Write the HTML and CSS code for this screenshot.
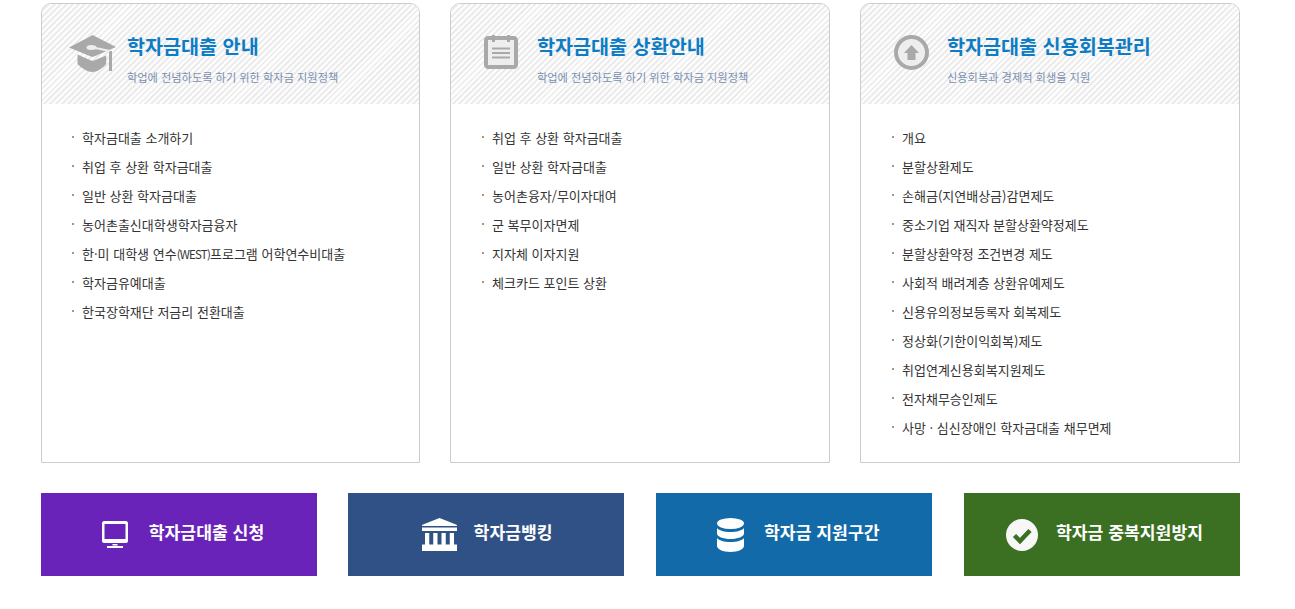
FILE: index.html
```html
<!DOCTYPE html>
<html lang="ko">

<head>
    <meta charset="utf-8">
    <title>학자금대출</title>
    <link rel="stylesheet" href="styles.css">
</head>

<body>
    <div class="wrap">
        <div class="cards">
            <div class="card">
                <div class="card-head">
                    <div class="head-icon">
                        <svg width="47" height="37" viewBox="0 0 47 37">
                            <path fill="#a9a9a9" d="M23.500 0 47 12 25 21.500c-1 .4-2 .4-3 0L0 12.500 22 1z" />
                            <path fill="#a9a9a9" d="M8.500 19.500 22 25.500c1 .4 2.200 .4 3.200 0l12-5v8.500C33 33.500 28 37 23.500 37S13 33.500 8.500 29z" />
                            <path fill="none" stroke="#a9a9a9" stroke-width="3" d="M41.500 16v20" />
                            <path fill="none" stroke="#eeeeee" stroke-width="2" d="M24 12.500 41 16" />
                            <ellipse cx="22.500" cy="12.500" rx="5" ry="2.500" fill="#eeeeee" />
                        </svg>
                    </div>
                    <div class="head-text">
                        <h2>학자금대출 안내</h2>
                        <p>학업에 전념하도록 하기 위한 학자금 지원정책</p>
                    </div>
                </div>
                <ul class="links">
                    <li>학자금대출 소개하기</li>
                    <li>취업 후 상환 학자금대출</li>
                    <li>일반 상환 학자금대출</li>
                    <li>농어촌출신대학생학자금융자</li>
                    <li>한·미 대학생 연수<span class="latin">(WEST)</span>프로그램 어학연수비대출</li>
                    <li>학자금유예대출</li>
                    <li>한국장학재단 저금리 전환대출</li>
                </ul>
            </div>
            <div class="card">
                <div class="card-head">
                    <div class="head-icon">
                        <svg width="34" height="34" viewBox="0 0 34 34">
                            <path fill="#a9a9a9" d="M4 1h4V0h3v1h12V0h3v1h4c2 0 4 2 4 4v25c0 2-2 4-4 4H4c-2 0-4-2-4-4V5c0-2 2-4 4-4z" />
                            <rect x="4" y="5" width="26" height="25" fill="#eeeeee" />
                            <path fill="#a9a9a9" d="M8 3h3v4H8zM23 3h3v4h-3z" />
                            <path fill="none" stroke="#a9a9a9" stroke-width="2" d="M8 13.500h18M8 18h18M8 22.500h18" />
                        </svg>
                    </div>
                    <div class="head-text">
                        <h2>학자금대출 상환안내</h2>
                        <p>학업에 전념하도록 하기 위한 학자금 지원정책</p>
                    </div>
                </div>
                <ul class="links">
                    <li>취업 후 상환 학자금대출</li>
                    <li>일반 상환 학자금대출</li>
                    <li>농어촌융자/무이자대여</li>
                    <li>군 복무이자면제</li>
                    <li>지자체 이자지원</li>
                    <li>체크카드 포인트 상환</li>
                </ul>
            </div>
            <div class="card">
                <div class="card-head">
                    <div class="head-icon">
                        <svg width="35" height="35" viewBox="0 0 35 35">
                            <circle cx="17.500" cy="17.500" r="15.500" fill="#eeeeee" stroke="#a9a9a9" stroke-width="4" />
                            <path fill="#a9a9a9" d="M17.500 10 25 18h-3.500v7h-8v-7H10z" />
                        </svg>
                    </div>
                    <div class="head-text">
                        <h2>학자금대출 신용회복관리</h2>
                        <p>신용회복과 경제적 회생을 지원</p>
                    </div>
                </div>
                <ul class="links">
                    <li>개요</li>
                    <li>분할상환제도</li>
                    <li>손해금(지연배상금)감면제도</li>
                    <li>중소기업 재직자 분할상환약정제도</li>
                    <li>분할상환약정 조건변경 제도</li>
                    <li>사회적 배려계층 상환유예제도</li>
                    <li>신용유의정보등록자 회복제도</li>
                    <li>정상화(기한이익회복)제도</li>
                    <li>취업연계신용회복지원제도</li>
                    <li>전자채무승인제도</li>
                    <li>사망 · 심신장애인 학자금대출 채무면제</li>
                </ul>
            </div>
        </div>

        <div class="quick">
            <a class="quick-btn purple" href="#">
                <span class="quick-icon">
                    <svg width="26" height="27" viewBox="0 0 26 27">
                        <path fill="#fff" fill-rule="evenodd" d="M2 0h22c1 0 2 1 2 2v18c0 1-1 2-2 2H2c-1 0-2-1-2-2V2c0-1 1-2 2-2zM2.500 3v15h21V3z" />
                        <path fill="#fff" d="M10.500 23h5v1.500h-5zM5 25h16v2H5z" />
                    </svg>
                </span>
                <span class="quick-label">학자금대출 신청</span>
            </a>
            <a class="quick-btn navy" href="#">
                <span class="quick-icon">
                    <svg width="35" height="33" viewBox="0 0 35 33">
                        <path fill="#fff" d="M17.500 0 34 6.500c.8.4 1 .6 1 1.500H0c0-.9.200-1.100 1-1.500zM0 9.500h35V13H0zM3 15h4.250v11.500H3zM11.250 15h4.250v11.500h-4.250zM19.500 15h4.250v11.500H19.500zM27.750 15H32v11.500h-4.250zM0 26.500h35V33H0z" />
                    </svg>
                </span>
                <span class="quick-label">학자금뱅킹</span>
            </a>
            <a class="quick-btn blue" href="#">
                <span class="quick-icon">
                    <svg width="27" height="34" viewBox="0 0 27 34">
                        <ellipse cx="13.500" cy="5.500" rx="13.500" ry="5.500" fill="#fff" />
                        <path fill="#fff" d="M0 10c2 2.500 7 4 13.500 4S25 12.500 27 10v5.500c0 3-6 5.500-13.500 5.500S0 18.500 0 15.500zM0 20c2 2.500 7 4 13.500 4S25 22.500 27 20v8c0 3-6 6-13.500 6S0 31 0 28z" />
                    </svg>
                </span>
                <span class="quick-label">학자금 지원구간</span>
            </a>
            <a class="quick-btn green" href="#">
                <span class="quick-icon">
                    <svg width="32" height="32" viewBox="0 0 32 32">
                        <circle cx="16" cy="16" r="16" fill="#f7f7f7" />
                        <path fill="none" stroke="#3b6f22" stroke-width="4.500" d="M8.500 16.500 14 22 24 11.500" />
                    </svg>
                </span>
                <span class="quick-label">학자금 중복지원방지</span>
            </a>
        </div>
    </div>
</body>

</html>
```

FILE: styles.css
```css
html,
body {
    margin: 0;
    padding: 0;
    background-color: #fff;
}

body {
    font-family: "Noto Sans CJK KR", "Noto Sans", sans-serif;
}

.wrap {
    width: 1199px;
    margin-left: 41px;
    padding-top: 3px;
}

.cards {
    display: grid;
    grid-template-columns: 379px 380px 380px;
    gap: 30px;
}

.card {
    height: 460px;
    box-sizing: border-box;
    border: 1px solid #ccc;
    border-radius: 10px 10px 0 0;
    overflow: hidden;
}

.card-head {
    display: flex;
    height: 100px;
    box-sizing: border-box;
    padding-left: 15px;
    background: repeating-linear-gradient(135deg, #ececec 0, #ececec 2px, #fdfdfd 2px, #fdfdfd 4.200px);
}

.head-icon {
    display: flex;
    justify-content: center;
    width: 70px;
    padding-top: 31px;
    flex: none;
}

.head-text {
    padding-top: 27px;
}

.card + .card .head-text {
    margin-left: 1px;
}

.head-text h2 {
    margin: 0;
    font-size: 19.600px;
    line-height: 30px;
    font-weight: 700;
    color: #0d7cc4;
    white-space: nowrap;
}

.head-text p {
    margin: 8px 0 0;
    font-size: 11.200px;
    line-height: 16px;
    color: #7b8fb2;
    white-space: nowrap;
}

.links {
    list-style: none;
    margin: 0;
    padding: 19px 0 0 30px;
}

.card + .card .links {
    padding-left: 31px;
}

.links li {
    position: relative;
    padding-left: 10px;
    height: 29px;
    line-height: 29px;
    font-size: 13px;
    color: #333;
    white-space: nowrap;
}

.links li::before {
    content: "";
    position: absolute;
    left: 0;
    top: 13px;
    width: 2px;
    height: 2px;
    background-color: #b98f70;
}

.latin {
    font-size: 11.500px;
    letter-spacing: -0.800px;
}

.quick {
    display: grid;
    grid-template-columns: repeat(4, 276px);
    justify-content: space-between;
    margin-top: 30px;
}

.quick-btn {
    display: flex;
    align-items: center;
    justify-content: center;
    gap: 16px;
    height: 83px;
    padding-left: 3px;
    box-sizing: border-box;
    color: #fff;
    font-size: 17.200px;
    font-weight: 700;
    text-decoration: none;
    white-space: nowrap;
}

.quick-icon {
    display: flex;
    align-items: center;
    justify-content: center;
    width: 36px;
}

.quick-label {
    padding-bottom: 7px;
}

.purple {
    background-color: #6a23b8;
}

.navy {
    margin-left: -1px;
    margin-right: 1px;
    background-color: #2f5186;
}

.blue {
    background-color: #126ba8;
}

.green {
    background-color: #3b6f22;
}
```
